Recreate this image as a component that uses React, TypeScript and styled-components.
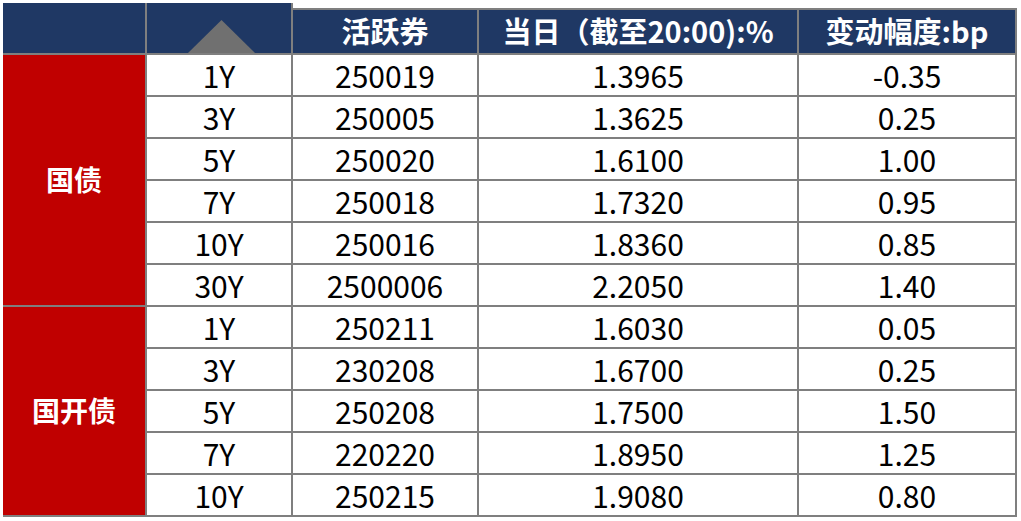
import React from 'react';
import styled, { createGlobalStyle, css } from 'styled-components';

const Global = createGlobalStyle`
  html, body { margin: 0; padding: 0; background: #ffffff; }
  body { font-family: "Noto Sans CJK SC", "Microsoft YaHei", sans-serif; }
`;

const LINE = '#7f7f7f';
const NAVY = '#1f3864';
const RED = '#c00000';

const Page = styled.div`
  box-sizing: border-box;
  width: 1021px;
  height: 521px;
  padding: 3px 0 0 3px;
  overflow: hidden;
  background: #ffffff;
`;

const Table = styled.div`
  display: grid;
  grid-template-columns: 144px 146px 186px 320px 218px;
  grid-template-rows: 52px repeat(11, 42px);
  font-family: "Noto Sans CJK SC", "Microsoft YaHei", sans-serif;
  font-size: 28px;
  line-height: 1;
`;

const HeadCell = styled.div<{ $inset?: boolean; $bottom?: boolean }>`
  box-sizing: border-box;
  display: flex;
  justify-content: center;
  align-items: ${(p) => (p.$bottom ? 'flex-end' : 'center')};
  background: ${NAVY};
  color: #ffffff;
  font-size: 29px;
  font-weight: 700;
  white-space: nowrap;
  border-right: 2px solid ${LINE};
  border-bottom: 2px solid ${LINE};
  padding-bottom: ${(p) => (p.$bottom ? '0' : '3px')};
  ${(p) =>
    p.$inset &&
    css`
      margin-top: 5px;
      border-top: 2px solid ${LINE};
    `}
`;

const GroupCell = styled.div<{ $span: number }>`
  box-sizing: border-box;
  grid-row: span ${(p) => p.$span};
  display: flex;
  justify-content: center;
  align-items: center;
  background: ${RED};
  color: #ffffff;
  font-weight: 700;
  border-right: 2px solid ${LINE};
  border-bottom: 2px solid ${LINE};
  padding-bottom: 3px;
`;

const DataCell = styled.div`
  box-sizing: border-box;
  display: flex;
  justify-content: center;
  align-items: center;
  background: #ffffff;
  color: #000000;
  font-size: 30px;
  font-weight: 400;
  border-right: 2px solid ${LINE};
  border-bottom: 2px solid ${LINE};
  padding-bottom: 1px;
`;

const SortMark = styled.svg`
  display: block;
  margin-left: 5px;
`;

type Row = [string, string, string, string];

const groups: { name: string; rows: Row[] }[] = [
  {
    name: '国债',
    rows: [
      ['1Y', '250019', '1.3965', '-0.35'],
      ['3Y', '250005', '1.3625', '0.25'],
      ['5Y', '250020', '1.6100', '1.00'],
      ['7Y', '250018', '1.7320', '0.95'],
      ['10Y', '250016', '1.8360', '0.85'],
      ['30Y', '2500006', '2.2050', '1.40'],
    ],
  },
  {
    name: '国开债',
    rows: [
      ['1Y', '250211', '1.6030', '0.05'],
      ['3Y', '230208', '1.6700', '0.25'],
      ['5Y', '250208', '1.7500', '1.50'],
      ['7Y', '220220', '1.8950', '1.25'],
      ['10Y', '250215', '1.9080', '0.80'],
    ],
  },
];

export default function App() {
  return (
    <>
      <Global />
      <Page>
        <Table>
          <HeadCell />
          <HeadCell $bottom>
            <SortMark width="67" height="33" viewBox="0 0 67 33">
              <polygon points="33.5,0 67,33 0,33" fill="#707070" />
            </SortMark>
          </HeadCell>
          <HeadCell $inset>活跃券</HeadCell>
          <HeadCell $inset>当日（截至20:00):%</HeadCell>
          <HeadCell $inset>变动幅度:bp</HeadCell>
          {groups.map((g) => (
            <React.Fragment key={g.name}>
              <GroupCell $span={g.rows.length}>{g.name}</GroupCell>
              {g.rows.map((r, i) =>
                r.map((v, j) => <DataCell key={`${g.name}-${i}-${j}`}>{v}</DataCell>)
              )}
            </React.Fragment>
          ))}
        </Table>
      </Page>
    </>
  );
}
